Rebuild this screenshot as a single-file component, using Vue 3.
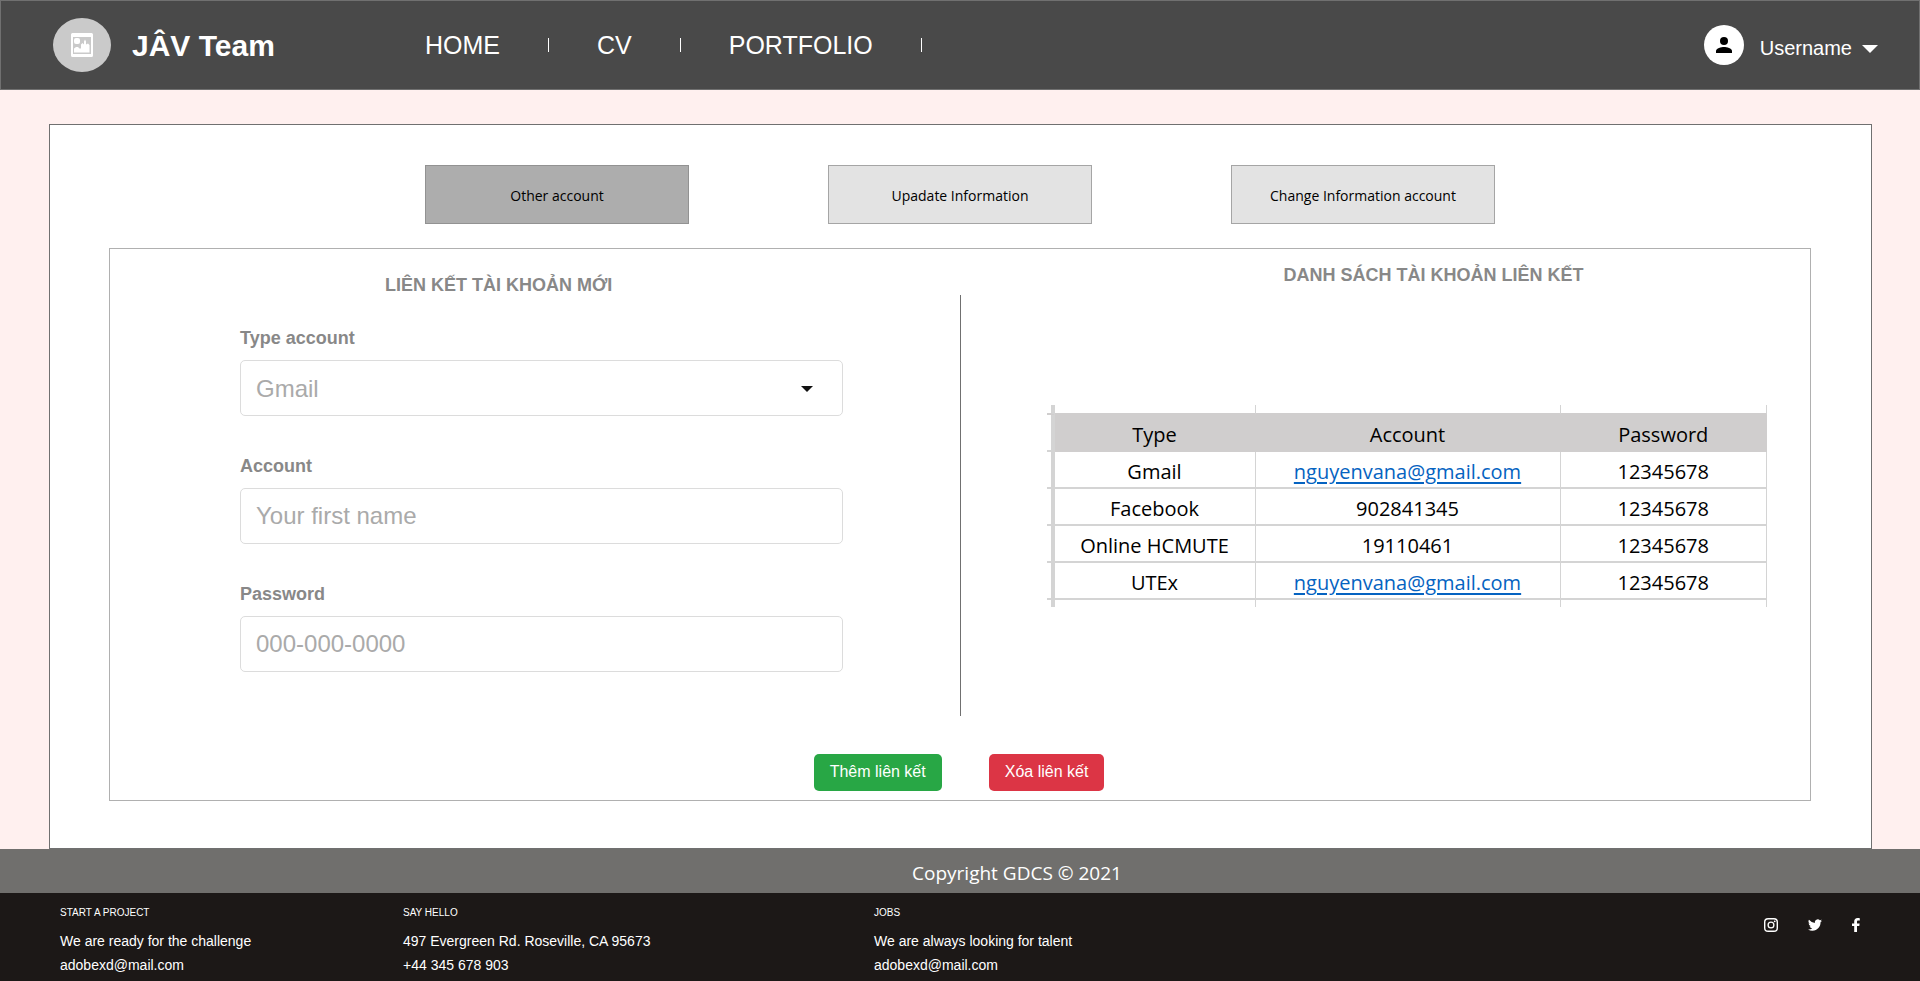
<script setup>
import { ref } from 'vue'

const menu = ['HOME', 'CV', 'PORTFOLIO']
const tabs = ['Other account', 'Upadate Information', 'Change Information account']
const activeTab = ref(0)
const accountType = ref('Gmail')
const account = ref('')
const password = ref('')

const linked = [
  { type: 'Gmail', account: 'nguyenvana@gmail.com', password: '12345678' },
  { type: 'Facebook', account: '902841345', password: '12345678' },
  { type: 'Online HCMUTE', account: '19110461', password: '12345678' },
  { type: 'UTEx', account: 'nguyenvana@gmail.com', password: '12345678' },
]

const contacts = [
  { title: 'START A PROJECT', lines: ['We are ready for the challenge', 'adobexd@mail.com'] },
  { title: 'SAY HELLO', lines: ['497 Evergreen Rd. Roseville, CA 95673', '+44 345 678 903'] },
  { title: 'JOBS', lines: ['We are always looking for talent', 'adobexd@mail.com'] },
]
</script>

<template>
  <div class="page">
    <header class="topbar">
      <a class="brand" href="#">
        <span class="logo">
          <svg width="22" height="24" viewBox="0 0 22 24" aria-hidden="true">
            <path fill="#fff" fill-rule="evenodd" d="M1.500 0h19A1.500 1.500 0 0 1 22 1.500v21a1.500 1.500 0 0 1-1.500 1.500h-19A1.500 1.500 0 0 1 0 22.500v-21A1.500 1.500 0 0 1 1.500 0zM2 4v17h18V4z" />
            <rect x="3" y="5" width="6" height="6" rx="2" fill="#fff" />
            <path fill="#fff" d="M3 19.500v-4l2-1.500h2l1.500 1.500h1.500v-4l1.500-1.500 1.500 1.500V8.500l1-2 1 2v3l2-1 1.500 1.500v7.500z" />
          </svg>
        </span>
        <span class="brand-name">JÂV Team</span>
      </a>
      <nav class="menu">
        <a v-for="item in menu" :key="item" href="#">{{ item }}</a>
      </nav>
      <button class="user" type="button">
        <span class="avatar">
          <svg width="16" height="16" viewBox="0 0 16 16" aria-hidden="true">
            <circle cx="8" cy="4" r="4" />
            <path d="M0 16v-2c0-2.700 5.300-4 8-4s8 1.300 8 4v2z" />
          </svg>
        </span>
        <span class="user-name">Username</span>
        <svg class="user-caret" width="16" height="8" viewBox="0 0 16 8" aria-hidden="true">
          <path fill="#fff" d="M0 0h16L8 8z" />
        </svg>
      </button>
    </header>

    <main class="card">
      <div class="tabs">
        <button
          v-for="(tab, i) in tabs"
          :key="tab"
          type="button"
          class="tab"
          :class="{ active: i === activeTab }"
          @click="activeTab = i"
        >{{ tab }}</button>
      </div>

      <section class="panel">
        <div class="halves">
          <form class="link-form" @submit.prevent>
            <h2>LIÊN KẾT TÀI KHOẢN MỚI</h2>
            <div class="fields">
              <div class="field">
                <label for="type">Type account</label>
                <div class="select-wrap">
                  <select id="type" v-model="accountType">
                    <option v-for="row in linked" :key="row.type">{{ row.type }}</option>
                  </select>
                  <svg class="select-caret" width="12" height="6" viewBox="0 0 12 6" aria-hidden="true">
                    <path fill="#111" d="M0 0h12L6 6z" />
                  </svg>
                </div>
              </div>
              <div class="field">
                <label for="account">Account</label>
                <input id="account" v-model="account" type="text" placeholder="Your first name">
              </div>
              <div class="field">
                <label for="password">Password</label>
                <input id="password" v-model="password" type="text" placeholder="000-000-0000">
              </div>
            </div>
          </form>

          <div class="divider"></div>

          <div class="link-list">
            <h2>DANH SÁCH TÀI KHOẢN LIÊN KẾT</h2>
            <table>
              <thead>
                <tr class="edge top"><td></td><td></td><td></td><td></td></tr>
                <tr><td></td><th>Type</th><th>Account</th><th>Password</th></tr>
              </thead>
              <tbody>
                <tr v-for="row in linked" :key="row.type">
                  <td></td>
                  <td>{{ row.type }}</td>
                  <td>
                    <a v-if="row.account.includes('@')" :href="'mailto:' + row.account">{{ row.account }}</a>
                    <template v-else>{{ row.account }}</template>
                  </td>
                  <td>{{ row.password }}</td>
                </tr>
                <tr class="edge bottom"><td></td><td></td><td></td><td></td></tr>
              </tbody>
            </table>
          </div>
        </div>

        <div class="actions">
          <button type="button" class="btn add">Thêm liên kết</button>
          <button type="button" class="btn remove">Xóa liên kết</button>
        </div>
      </section>
    </main>

    <div class="copyright">Copyright GDCS © 2021</div>

    <footer class="footer">
      <div v-for="c in contacts" :key="c.title" class="contact">
        <h3>{{ c.title }}</h3>
        <p v-for="line in c.lines" :key="line">{{ line }}</p>
      </div>
      <div class="social">
        <a href="#" aria-label="Instagram">
          <svg width="14" height="14" viewBox="0 0 14 14" fill="none" stroke="#fff" aria-hidden="true">
            <rect x="0.700" y="0.700" width="12.600" height="12.600" rx="3.400" stroke-width="1.400" />
            <circle cx="7" cy="7" r="2.900" stroke-width="1.300" />
            <circle cx="10.700" cy="3.300" r="0.900" fill="#fff" stroke="none" />
          </svg>
        </a>
        <a href="#" aria-label="Twitter">
          <svg width="14" height="14" viewBox="0 0 24 24" fill="#fff" aria-hidden="true">
            <path d="M24 4.600a10 10 0 0 1-2.800.8 5 5 0 0 0 2.200-2.700c-1 .6-2 1-3.100 1.200a4.900 4.900 0 0 0-8.400 4.500A14 14 0 0 1 1.700 3.100a4.900 4.900 0 0 0 1.500 6.600 5 5 0 0 1-2.200-.6v.1a4.900 4.900 0 0 0 3.900 4.800 5 5 0 0 1-2.200.1 4.900 4.900 0 0 0 4.600 3.400A9.900 9.900 0 0 1 0 19.500a14 14 0 0 0 7.500 2.200c9.100 0 14-7.500 14-14v-.6A10 10 0 0 0 24 4.600z" />
          </svg>
        </a>
        <a href="#" aria-label="Facebook">
          <svg width="8" height="14" viewBox="0 0 8 14" fill="#fff" aria-hidden="true">
            <path d="M2.200 14V8H0V5.400h2.200V3.600C2.200 1.300 3.500 0 5.600 0 6.600 0 7.600.1 7.800.2v2.300H6.400c-1.100 0-1.400.5-1.400 1.300v1.600h2.600L7.300 8H5v6z" />
          </svg>
        </a>
      </div>
    </footer>
  </div>
</template>

<style>
body {
  margin: 0;
  background: #fff0ef;
}
</style>

<style scoped>
.page {
  display: flex;
  flex-direction: column;
  min-height: 100vh;
  font-family: "Liberation Sans", Arial, sans-serif;
}
.page * {
  box-sizing: border-box;
}
h2, h3, p {
  margin: 0;
}
button, input, select {
  font-family: inherit;
  margin: 0;
}
a {
  color: inherit;
  text-decoration: none;
}

.topbar {
  display: flex;
  align-items: center;
  height: 90px;
  padding: 0 41px 0 52px;
  background: #494949;
  border: 1px solid #707070;
  color: #fff;
}
.brand {
  display: flex;
  align-items: center;
  gap: 21px;
  width: 372px;
}
.logo {
  display: flex;
  align-items: center;
  justify-content: center;
  width: 58px;
  height: 54px;
  border-radius: 50%;
  background: #cacaca;
}
.brand-name {
  font-size: 30px;
  font-weight: bold;
  line-height: 34px;
  padding-top: 2px;
}
.menu {
  display: flex;
  align-items: center;
  flex: 1;
}
.menu a {
  display: flex;
  align-items: center;
  font-size: 25px;
  line-height: 30px;
}
.menu a::after {
  content: "";
  width: 1px;
  height: 14px;
  margin: 0 48px;
  background: #fff;
}
.user {
  display: flex;
  align-items: center;
  padding: 0;
  border: 0;
  background: none;
  color: inherit;
  font-size: 20px;
}
.avatar {
  display: flex;
  align-items: center;
  justify-content: center;
  width: 40px;
  height: 40px;
  margin-right: 16px;
  border-radius: 50%;
  background: #fff;
}
.user-name {
  padding-top: 6px;
}
.user-caret {
  margin: 8px 0 0 10px;
}

.card {
  margin: 34px 48px 0 49px;
  padding: 40px 60px 47px 59px;
  background: #fff;
  border: 1px solid #707070;
}
.tabs {
  display: flex;
  justify-content: center;
  gap: 139px;
}
.tab {
  width: 264px;
  height: 59px;
  padding: 1px 0 0;
  border: 1px solid #a5a5a5;
  background: #e3e3e3;
  color: #000;
  font-family: "Open Sans", "Noto Sans", sans-serif;
  font-size: 14px;
}
.tab.active {
  border-color: #929292;
  background: #adadad;
}

.panel {
  margin-top: 24px;
  padding-bottom: 9px;
  border: 1px solid #b0b0b0;
}
.halves {
  display: grid;
  grid-template-columns: 1fr 1px 1fr;
}
h2 {
  color: #888;
  font-size: 18px;
  font-weight: bold;
  line-height: 20px;
}
.link-form {
  padding: 26px 117px 0 130px;
}
.link-form h2 {
  padding-left: 145px;
}
.fields {
  display: flex;
  flex-direction: column;
  gap: 36px;
  margin-top: 29px;
}
.field label {
  display: block;
  margin-bottom: 8px;
  color: #888;
  font-size: 18px;
  font-weight: bold;
  line-height: 28px;
}
.field input,
.field select {
  display: block;
  width: 100%;
  height: 56px;
  padding: 0 15px;
  border: 1px solid #dcdcdc;
  border-radius: 5px;
  background: #fff;
  color: #aaa;
  font-size: 24px;
  appearance: none;
}
.field input::placeholder {
  color: #aaa;
  opacity: 1;
}
.select-wrap {
  position: relative;
}
.select-caret {
  position: absolute;
  top: 26px;
  right: 30px;
}
.divider {
  height: 421px;
  margin-top: 46px;
  background: #707070;
}
.link-list {
  padding: 16px 43px 0 86px;
}
.link-list h2 {
  padding-left: 237px;
}

table {
  width: 100%;
  margin-top: 120px;
  border-spacing: 0;
  table-layout: fixed;
  font-family: "Open Sans", "Noto Sans", sans-serif;
  font-size: 20px;
}
td, th {
  height: 37px;
  padding: 5px 0 0;
  border-right: 1px solid #d4d4d4;
  border-bottom: 2px solid #d4d4d4;
  font-weight: normal;
  line-height: 30px;
  text-align: center;
  color: #000;
}
tr > :nth-child(1) {
  width: 8px;
  border-right-width: 4px;
}
tr > :nth-child(2) {
  width: 201px;
}
tr > :nth-child(3) {
  width: 305px;
}
th {
  background: #d0cece;
  border-color: #d0cece;
}
.edge td {
  padding: 0;
  line-height: 0;
}
.top td {
  height: 10px;
  border-bottom-color: #d0cece;
}
.bottom td {
  height: 7px;
  border-bottom: 0;
}
td a {
  color: #0563c1;
  text-decoration: underline;
  text-underline-offset: 3px;
}

.actions {
  display: flex;
  justify-content: center;
  gap: 47px;
  margin-top: 38px;
  padding-right: 2px;
}
.btn {
  padding: 9px 16px 10px;
  border: 0;
  border-radius: 5px;
  color: #fff;
  font-size: 16px;
  line-height: 18px;
}
.add {
  background: #28a745;
}
.remove {
  background: #dc3545;
}

.copyright {
  padding: 11px 0 6px 114px;
  background: #706f6d;
  color: #fff;
  font-family: "Open Sans", "Noto Sans", sans-serif;
  font-size: 19px;
  line-height: 27px;
  text-align: center;
}

.footer {
  display: grid;
  grid-template-columns: 343fr 471fr 890fr auto;
  flex: 1;
  padding: 14px 60px 2px;
  background: #1c1817;
  color: #fff;
}
.contact h3 {
  margin-bottom: 10px;
  font-size: 10px;
  font-weight: normal;
  line-height: 12px;
}
.contact p {
  font-size: 14px;
  line-height: 24px;
}
.social {
  display: flex;
  gap: 30px;
  padding-top: 11px;
}
.social svg {
  display: block;
}
</style>
